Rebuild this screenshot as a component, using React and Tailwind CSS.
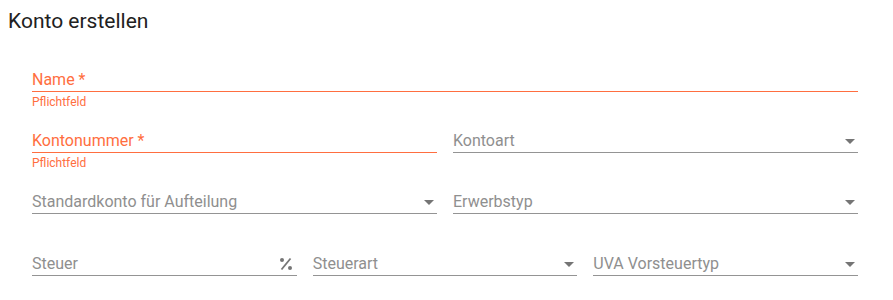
function Arrow() {
  return (
    <svg width="10" height="5" viewBox="0 0 10 5" className="shrink-0 mr-[3px]">
      <path d="M0 0 L10 0 L5 5 Z" fill="#757575" />
    </svg>
  );
}

function Percent() {
  return (
    <svg width="14" height="14" viewBox="0 0 14 14" className="shrink-0 mr-[4px]">
      <circle cx="3" cy="3" r="2" fill="#757575" />
      <circle cx="11" cy="11" r="2" fill="#757575" />
      <path d="M2.5 12.5 L11.5 1.5" stroke="#757575" strokeWidth="1.8" />
    </svg>
  );
}

function Field({ label, error, select, percent }) {
  const border = error ? 'border-[#ff6e40]' : 'border-[#949494]';
  return (
    <div className="flex-1 min-w-0">
      <div className={`flex items-center justify-between border-b ${border} pt-[2px] pb-[1px]`}>
        <span className={`text-[16px] leading-[20px] ${error ? 'text-[#ff6e40]' : 'text-[#8f8f8f]'}`}>
          {label}
        </span>
        {select && <Arrow />}
        {percent && <Percent />}
      </div>
      {error && (
        <div className="text-[12px] leading-[14px] mt-[3px] text-[#ff6e40]">Pflichtfeld</div>
      )}
    </div>
  );
}

export default function App() {
  return (
    <div className="bg-white w-[893px] h-[300px] font-['Roboto',sans-serif]">
      <h1 className="pl-[8px] pt-[8px] text-[21px] leading-[26px] text-[#212121]">Konto erstellen</h1>

      <div className="pl-[32px] pr-[35px] pt-[34px]">
        <div className="h-[61px] flex">
          <Field label="Name *" error />
        </div>
        <div className="h-[61px] flex gap-4">
          <Field label="Kontonummer *" error />
          <Field label="Kontoart" select />
        </div>
        <div className="h-[62px] flex gap-4">
          <Field label="Standardkonto für Aufteilung" select />
          <Field label="Erwerbstyp" select />
        </div>
        <div className="h-[61px] flex gap-4">
          <Field label="Steuer" percent />
          <Field label="Steuerart" select />
          <Field label="UVA Vorsteuertyp" select />
        </div>
      </div>
    </div>
  );
}
